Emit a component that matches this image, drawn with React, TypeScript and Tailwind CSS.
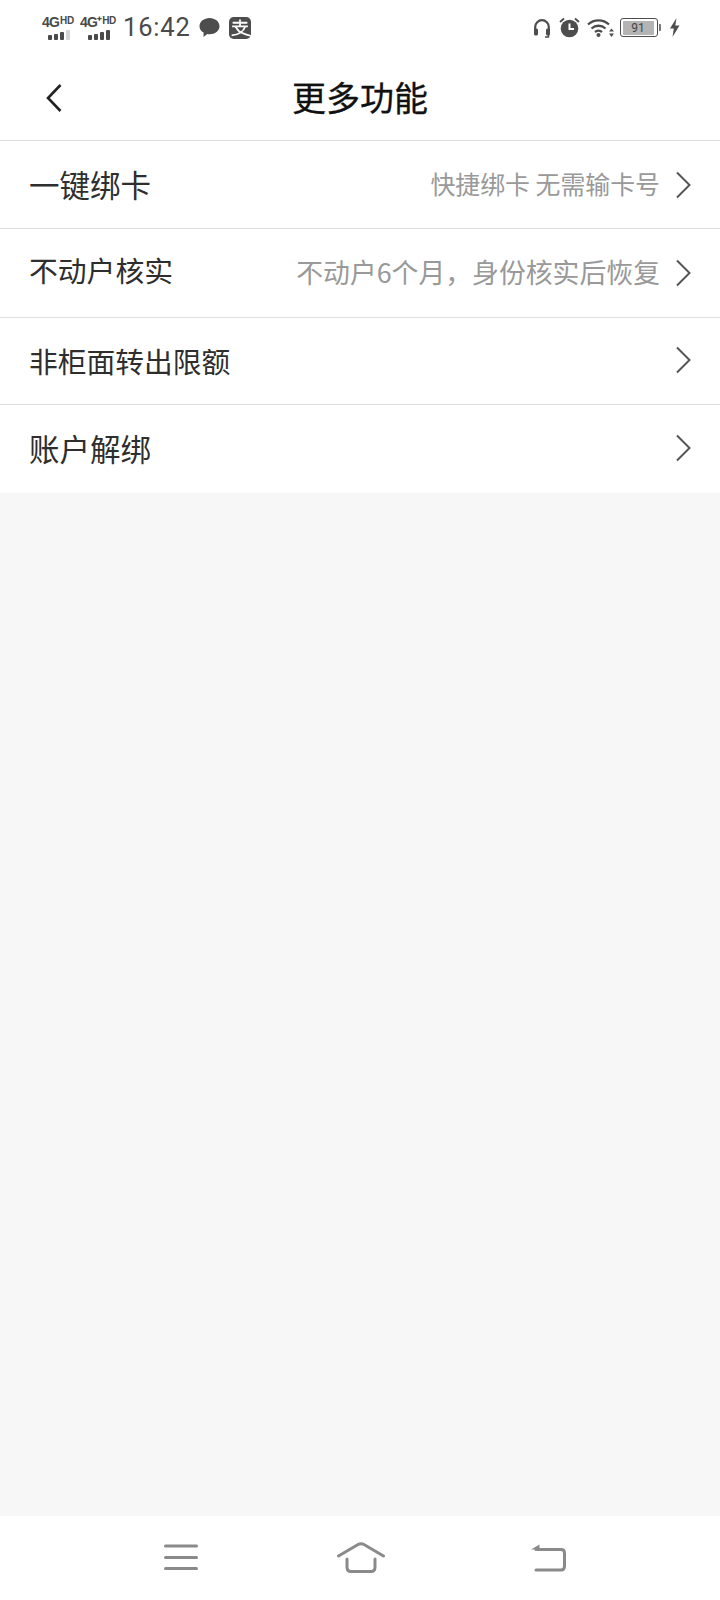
const CJK = "font-['Noto_Sans_CJK_SC','Noto_Sans',sans-serif]";

function Signal({ fade }: { fade?: boolean }) {
  const hs = [5, 6, 8, 10];
  return (
    <div className="flex items-end gap-[2px] h-[10px] ml-[3px]">
      {hs.map((h, i) => (
        <div
          key={i}
          className={i === 3 && fade ? "w-[4px] rounded-[1px] bg-[#d4d4d4]" : "w-[4px] rounded-[1px] bg-[#4a4a4a]"}
          style={{ height: h }}
        />
      ))}
    </div>
  );
}

function Net({ a, b, fade }: { a: string; b: string; fade?: boolean }) {
  return (
    <div className="flex flex-col items-center">
      <div className="flex items-start font-['Liberation_Sans',sans-serif] font-bold text-[#4a4a4a] leading-[15px] h-[15px] whitespace-nowrap">
        <span className="text-[14px] tracking-[-0.8px]">{a}</span>
        <span className="text-[10px] leading-[12px] tracking-[-0.3px] ml-[1px]">{b}</span>
      </div>
      <Signal fade={fade} />
    </div>
  );
}

function StatusBar() {
  return (
    <div className="h-[60px] flex items-center justify-between pl-[42px] pr-[39px] pb-[5px] bg-white">
      <div className="flex items-center">
        <Net a="4G" b="HD" fade />
        <div className="w-[6px]" />
        <Net a="4G⁺" b="HD" />
        <span className="ml-[7px] text-[25.5px] leading-none tracking-[0.8px] text-[#4a4a4a] font-['Roboto',sans-serif]">16:42</span>
        <svg className="ml-[8px]" width="21" height="21" viewBox="0 0 21 21">
          <path d="M10.5 1C16 1 20.5 4.6 20.5 9.2C20.5 13.8 16 17.2 10.5 17.2C9.7 17.2 9 17.1 8.3 17L4.5 20L4.6 15.6C2 14.2 .5 11.9 .5 9.2C.5 4.6 5 1 10.5 1Z" fill="#4d4d4d" />
        </svg>
        <svg className="ml-[9px]" width="22" height="22" viewBox="0 0 21 21">
          <rect width="21" height="21" rx="4.5" fill="#4d4d4d" />
          <path d="M3.5 5.5H17.5M10.5 2.5V8.5M3 9H18M6 9L9 13C11 15 15 16.5 21 18M15.5 9C14 13.5 9 17 2.5 17.5" stroke="#fff" strokeWidth="1.7" fill="none" />
        </svg>
      </div>
      <div className="flex items-center">
        <svg width="18" height="20" viewBox="0 0 18 20" fill="none">
          <path d="M2.2 12V9A6.8 6.8 0 0 1 15.8 9V12" stroke="#4d4d4d" strokeWidth="2.2" />
          <rect x="1" y="10.5" width="4" height="7" rx="1.6" fill="#4d4d4d" />
          <rect x="13" y="10.5" width="4" height="7" rx="1.6" fill="#4d4d4d" />
          <path d="M15.5 17V19H12" stroke="#4d4d4d" strokeWidth="1.4" />
        </svg>
        <svg className="ml-[8px]" width="21" height="21" viewBox="0 0 21 21" fill="none">
          <circle cx="10.5" cy="11.5" r="8.8" fill="#4d4d4d" />
          <path d="M10.5 6.5V12H15" stroke="#fff" strokeWidth="2" />
          <path d="M1 5L5 1.5M20 5L16 1.5" stroke="#4d4d4d" strokeWidth="1.8" />
        </svg>
        <svg className="ml-[7px]" width="27" height="20" viewBox="0 0 27 20" fill="none">
          <path d="M1 6.5C7 1 16 1 22 6.5" stroke="#4d4d4d" strokeWidth="2.3" />
          <path d="M4.5 10.5C8.5 6.8 14.5 6.8 18.5 10.5" stroke="#4d4d4d" strokeWidth="2.3" />
          <path d="M8 14C10 12.3 13 12.3 15 14" stroke="#4d4d4d" strokeWidth="2.3" />
          <circle cx="11.5" cy="17" r="2" fill="#4d4d4d" />
          <path d="M24.5 10.5L27 13.5H22ZM24.5 19L22 15.5H27Z" fill="#4d4d4d" />
        </svg>
        <div className="ml-[6px] flex items-center">
          <div className="w-[38px] h-[19px] rounded-[3px] border-[1.5px] border-[#4d4d4d] p-[1.5px] flex">
            <div className="w-[31px] h-full bg-[#b4b4b4] rounded-[1px] flex items-center justify-center text-[12px] leading-none text-[#444] font-['Roboto',sans-serif]">91</div>
          </div>
          <div className="ml-[1px] w-[2px] h-[7px] bg-[#777] rounded-r-[1px]" />
        </div>
        <svg className="ml-[8px] mr-[1px]" width="11" height="19" viewBox="0 0 11 19">
          <path d="M7.5 0L1 10.5H4.8L3.5 19L10.5 7.5H6.3Z" fill="#4d4d4d" />
        </svg>
      </div>
    </div>
  );
}

function Chevron({ className }: { className?: string }) {
  return (
    <svg className={className} width="17" height="28" viewBox="0 0 17 28" fill="none">
      <path d="M2 1.5L14.5 14L2 26.5" stroke="#555" strokeWidth="2" />
    </svg>
  );
}

function Row({
  label,
  sub,
  labelClass,
  subClass,
  heightClass,
  chevronClass,
  last,
}: {
  label: string;
  sub?: string;
  labelClass: string;
  subClass?: string;
  heightClass: string;
  chevronClass?: string;
  last?: boolean;
}) {
  return (
    <div className={`${heightClass} flex items-center justify-between pl-[29px] pr-[28px] ${last ? "" : "border-b border-[#dedede]"}`}>
      <span className={`${labelClass} leading-none text-[#2e2e2e]`}>{label}</span>
      <div className="flex items-center">
        {sub && <span className={`${subClass} leading-none text-[#999999] mr-[15px] pb-[2px] whitespace-pre`}>{sub}</span>}
        <Chevron className={chevronClass} />
      </div>
    </div>
  );
}

export default function App() {
  return (
    <div className={`${CJK} w-[720px] h-[1600px] flex flex-col bg-[#f7f7f7]`}>
      <StatusBar />
      <div className="relative h-[81px] bg-white border-b border-[#dedede] flex items-center justify-center">
        <svg className="absolute left-[45px] top-[23px]" width="18" height="30" viewBox="0 0 18 30" fill="none">
          <path d="M15.5 2L3 15L15.5 28" stroke="#222" strokeWidth="2.6" />
        </svg>
        <span className="text-[34px] leading-none font-normal text-[#111111] pb-[7px] [-webkit-text-stroke:0.3px_#111111]">更多功能</span>
      </div>
      <div className="bg-white">
        <Row label="一键绑卡" sub="快捷绑卡 无需输卡号" labelClass="text-[30.5px] pb-[1px]" subClass="text-[24.9px]" heightClass="h-[88px]" />
        <Row label="不动户核实" sub="不动户6个月，身份核实后恢复" labelClass="text-[28.8px] pb-[5px]" subClass="text-[26.85px]" heightClass="h-[89px]" />
        <Row label="非柜面转出限额" labelClass="text-[28.75px]" heightClass="h-[87px]" chevronClass="mb-[2px]" />
        <Row label="账户解绑" labelClass="text-[30.5px] pb-[1px]" heightClass="h-[88px]" chevronClass="mb-[2px]" last />
      </div>
      <div className="flex-1" />
      <div className="h-[84px] bg-white flex items-start pt-[28px] pl-[164px]">
        <svg width="34" height="26" viewBox="0 0 34 26" fill="none">
          <path d="M1.5 2H32.5M1.5 13.5H32.5M1.5 24.5H32.5" stroke="#8a8a8a" strokeWidth="3" strokeLinecap="round" />
        </svg>
        <svg className="ml-[139px] -mt-[2px]" width="48" height="31" viewBox="0 0 48 31" fill="none">
          <path d="M1.5 14L21 2.5Q24 1 27 2.5L46.5 14" stroke="#8a8a8a" strokeWidth="3" strokeLinecap="round" />
          <path d="M10 17V25Q10 29.5 14 29.5H34Q38 29.5 38 25V17" stroke="#8a8a8a" strokeWidth="3" strokeLinecap="round" />
        </svg>
        <svg className="ml-[145px]" width="36" height="28" viewBox="0 0 36 28" fill="none">
          <path d="M1 5.5L9.5 0.5V5.5Z" fill="#8a8a8a" />
          <path d="M6 5.5H31Q34.5 5.5 34.5 9V22Q34.5 26 31 26H6" stroke="#8a8a8a" strokeWidth="3" strokeLinecap="round" />
        </svg>
      </div>
    </div>
  );
}
